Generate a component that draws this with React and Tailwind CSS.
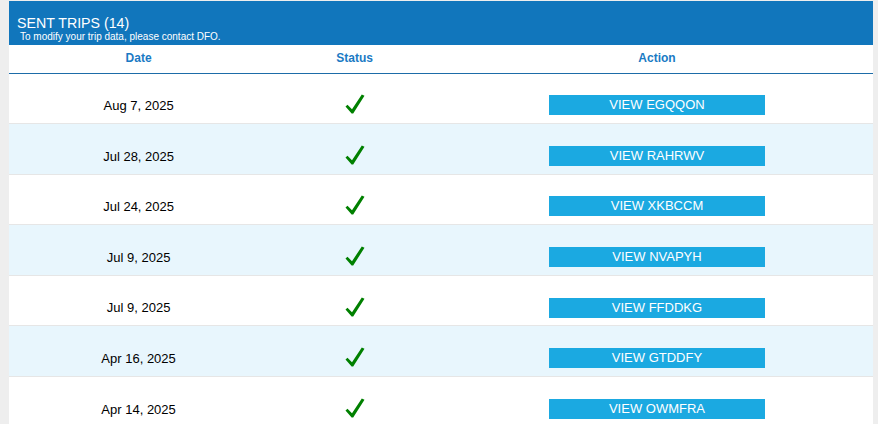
import React from "react";

const trips = [
  { date: "Aug 7, 2025", code: "EGQQON" },
  { date: "Jul 28, 2025", code: "RAHRWV" },
  { date: "Jul 24, 2025", code: "XKBCCM" },
  { date: "Jul 9, 2025", code: "NVAPYH" },
  { date: "Jul 9, 2025", code: "FFDDKG" },
  { date: "Apr 16, 2025", code: "GTDDFY" },
  { date: "Apr 14, 2025", code: "OWMFRA" },
];

const Check = () => (
  <svg width="20" height="20" viewBox="0 0 20 20" className="inline-block">
    <path d="M0.5 12.5 L2.5 10.8 L7 15.2 L16.8 0.5 L19.5 1.8 L8.2 19.5 L6.6 19.5 Z" fill="#008000" />
  </svg>
);

const App = () => {
  return (
    <div
      className="h-screen overflow-hidden bg-[#eeeeee] pt-px pl-[9px] pr-[5px]"
      style={{ fontFamily: '"Liberation Sans", Arial, sans-serif' }}
    >
      <div className="bg-white">
        <div className="bg-[#1176bc] h-[44px] pl-2 pt-[14px] text-white">
          <div className="text-[14.2px] leading-[16px]">SENT TRIPS (14)</div>
          <div className="text-[10px] leading-[12px] pl-[3px]">
            To modify your trip data, please contact DFO.
          </div>
        </div>
        <table className="w-full table-fixed border-collapse">
          <thead>
            <tr className="border-b border-[#1d6ca8] h-[28px]">
              <th className="w-[30%] text-[12px] font-bold text-[#1a7ac4] pb-[1px]">Date</th>
              <th className="w-[20%] text-[12px] font-bold text-[#1a7ac4] pb-[1px]">Status</th>
              <th className="w-[50%] text-[12px] font-bold text-[#1a7ac4] pb-[1px]">Action</th>
            </tr>
          </thead>
          <tbody>
            {trips.map((trip, index) => (
              <tr
                key={index}
                className={
                  index % 2 === 1
                    ? "bg-[#e8f6fd] border-b border-[#e6e6e6] h-[50.6px]"
                    : "bg-white border-b border-[#e6e6e6] h-[50.6px]"
                }
              >
                <td className="text-center text-[13px] text-black pt-[15px]">{trip.date}</td>
                <td className="text-center pt-[12px] leading-none">
                  <Check />
                </td>
                <td className="pt-[14px]">
                  <div className="mx-auto w-[216px] h-[20px] bg-[#1ba9e1] text-white text-[13px] leading-[20px] text-center">
                    VIEW {trip.code}
                  </div>
                </td>
              </tr>
            ))}
          </tbody>
        </table>
      </div>
    </div>
  );
};

export default App;
